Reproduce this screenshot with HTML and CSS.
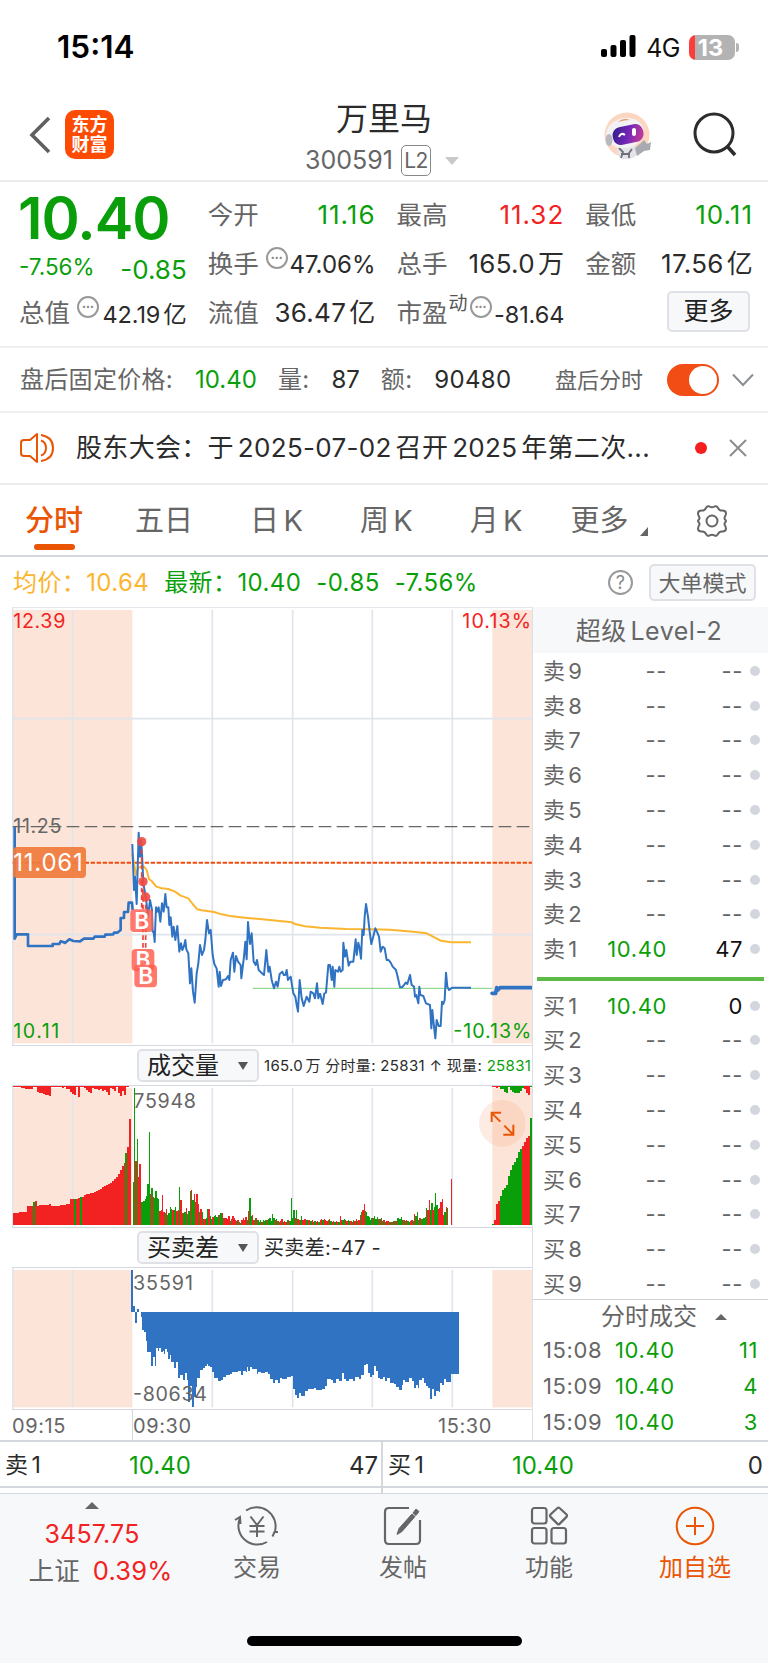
FILE: index.html
```html
<!DOCTYPE html>
<html lang="zh-CN">
  <head>
    <meta charset="UTF-8" />
    <meta name="viewport" content="width=device-width, initial-scale=1.0" />
    <title>万里马 300591</title>
    <link rel="stylesheet" href="styles.css">
  </head>
  <body>
    <div class="status-bar">
      <span class="clock">15:14</span>
      <div class="status-icons">
        <svg width="36" height="24" viewBox="0 0 36 24">
          <rect x="0" y="14" width="6" height="8" rx="2" />
          <rect x="9.5" y="10" width="6" height="12" rx="2" />
          <rect x="19" y="5" width="6" height="17" rx="2" />
          <rect x="28.5" y="0" width="6" height="22" rx="2" />
        </svg>
        <span class="network">4G</span>
        <div class="battery"><span>13</span></div>
        <div class="battery-tip"></div>
      </div>
    </div>

    <header class="header">
      <div class="header-side">
        <svg width="22" height="38" viewBox="0 0 22 38" fill="none" stroke="#606060" stroke-width="3.6">
          <path d="M20 2 3 19l17 17" />
        </svg>
        <div class="logo">东方<br>财富</div>
      </div>
      <div class="header-title">
        <h1>万里马</h1>
        <div class="code"><span>300591</span><span class="level">L2</span><i class="tri-down"></i></div>
      </div>
      <div class="header-side right">
        <svg width="48" height="50" viewBox="0 0 48 50">
          <defs>
            <linearGradient id="visor" x1="0" y1="0" x2="1" y2=".3">
              <stop offset="0" stop-color="#2b1f86" />
              <stop offset=".6" stop-color="#7426b8" />
              <stop offset="1" stop-color="#b63a9c" />
            </linearGradient>
          </defs>
          <circle cx="23" cy="25" r="22.5" fill="#fcd6c0" />
          <path d="M14 35q-3 7 2 13 8 3 15-1 3-5 0-12z" fill="#e4e4e8" />
          <path d="M31 38l6-5 3-3 3 4 4-2-1 8-6 1-7 5z" fill="#a9aab1" />
          <path d="M15 38l4 4-2 6M28 39l-3 4v5M17 44h9" stroke="#6d7078" stroke-width="1.8" fill="none" />
          <ellipse cx="21" cy="23" rx="19" ry="15" transform="rotate(-12 21 23)" fill="#f2f2f4" />
          <ellipse cx="5" cy="30" rx="3.5" ry="6" fill="#b9bac1" />
          <path d="M14 12q5-5 12-2-6 0-12 2z" fill="#e99557" />
          <rect x="8.500" y="15.500" width="31" height="18" rx="8" transform="rotate(-12 24 24)" fill="url(#visor)" />
          <path d="M15 27q2-5 6-2" stroke="#fff" stroke-width="2" fill="none" />
          <rect x="28" y="18" width="4" height="8" rx="2" fill="#fff" />
        </svg>
        <svg width="44" height="46" viewBox="0 0 44 46" fill="none" stroke="#2c2c2c" stroke-width="3">
          <circle cx="21" cy="21" r="19" />
          <path d="M34 34l8 9" stroke-width="3.6" />
        </svg>
      </div>
    </header>

    <section class="quote">
      <div class="price">10.40</div>
      <div class="cell"><label>今开</label><b class="green">11.16</b></div>
      <div class="cell"><label>最高</label><b class="red">11.32</b></div>
      <div class="cell"><label>最低</label><b class="green">10.11</b></div>

      <div class="cell change green"><span class="pct">-7.56%</span><span>-0.85</span></div>
      <div class="cell"><label>换手</label><i class="dots">•••</i><b class="mid">47.06%</b></div>
      <div class="cell"><label>总手</label><b>165.0<em>万</em></b></div>
      <div class="cell"><label>金额</label><b>17.56<em>亿</em></b></div>

      <div class="cell"><label>总值</label><i class="dots">•••</i><b class="small">42.19<em>亿</em></b></div>
      <div class="cell"><label>流值</label><b>36.47<em>亿</em></b></div>
      <div class="cell"><label>市盈</label><sup>动</sup><i class="dots tight">•••</i><b class="small">-81.64</b></div>
      <button class="more">更多</button>
    </section>

    <section class="after-hours">
      <span class="ah-label">盘后固定价格:</span>
      <span class="ah-price green">10.40</span>
      <span class="ah-label">量:</span>
      <span class="ah-vol">87</span>
      <span class="ah-label">额:</span>
      <span class="ah-amount">90480</span>
      <span class="ah-switch">盘后分时</span>
      <span class="toggle"></span>
      <svg width="22" height="14" viewBox="0 0 22 14" fill="none" stroke="#8a8d92" stroke-width="2">
        <path d="M1 1.500l10 10.500 10-10.500" />
      </svg>
    </section>

    <section class="notice">
      <svg width="36" height="32" viewBox="0 0 36 32" fill="none" stroke="#ea5504" stroke-width="2" stroke-linejoin="round">
        <path d="M17 2v28l-7-6H4q-3 0-3-3V11q0-3 3-3h6z" />
        <path d="M21 8.500q5 1.500 5 7.500t-5 7.500M21 3q12 2 12 13T21 29" />
      </svg>
      <p>股东大会：于<s></s>2025-07-02<s></s>召开<s></s>2025<s></s>年第二次...</p>
      <span class="dot"></span>
      <svg width="18" height="18" viewBox="0 0 18 18" stroke="#8c8c8c" stroke-width="2"><path d="M1 1l16 16M17 1 1 17" /></svg>
    </section>

    <nav class="tabs">
      <a class="active">分时</a>
      <a>五日</a>
      <a>日<s></s>K</a>
      <a>周<s></s>K</a>
      <a>月<s></s>K</a>
      <a class="tab-more">更多</a>
      <svg width="34" height="34" viewBox="0 0 34 34" fill="none" stroke="#666" stroke-width="2" stroke-linejoin="round">
        <path d="M11 4q1-2.500 3.500-1.500 2.500 1.500 5 0Q22 1.500 23 4q1.500 3 4.500 2.500 3 0 3.500 2.500 0 2-1 3.500-1 1.500 0 3 2 1.500 0 3-1 1.500 0 3 1 1.500 1 3.500-.5 2.500-3.500 2.500-3-.5-4.500 2.500-1 2.500-3.500 1.500-2.500-1.500-5 0Q12 32.500 11 30q-1.500-3-4.500-2.500-3 0-3.500-2.500 0-2 1-3.500 1-1.500 0-3-2-1.500 0-3 1-1.500 0-3-1-1.500-1-3.500.5-2.500 3.500-2.500Q9.500 7 11 4z" />
        <circle cx="17" cy="17" r="5.500" />
      </svg>
    </nav>

    <section class="summary">
      <span class="avg">均价：</span><span class="avg val">10.64</span>
      <span class="green">最新：</span><span class="green val">10.40</span><span class="green val">-0.85</span><span class="green">-7.56%</span>
      <i class="help">?</i>
      <button class="mode">大单模式</button>
    </section>

    <main class="board">
      <div class="charts">
        <!-- chart units are a third of a pixel -->
        <svg class="chart price-chart" viewBox="0 0 1560 1311">
          <rect class="session" x="2" y="6" width="359" height="1300" />
          <rect class="session" x="1441" y="6" width="119" height="1300" />
          <path class="grid" d="M182 6v1300M601 6v1300M842 6v1300M1081 6v1300M1321 6v1300M2 332H1560M2 980H1560M2 0V1311" />
          <path d="M2 656H1560" stroke="#666" stroke-width="4" stroke-dasharray="38 16" />
          <path d="M2 764H1560" stroke="#f04e0f" stroke-width="6" stroke-dasharray="13 5" />
          <path d="M722 1141H1441" stroke="#7bd07b" stroke-width="3" />
          <g fill="none" stroke-linejoin="round">
            <polyline class="avg-line" points="361,736 372,801 378,781 387,776 396,776 404,786 411,813 419,819 432,835 449,841 469,843 489,851 506,863 529,871 542,888 556,904 569,907 606,912 629,919 654,924 699,929 774,936 839,943 849,948 879,955 924,959 1004,963 1074,964 1134,965 1204,971 1244,976 1269,989 1286,998 1319,1003 1377,1003" />
            <g transform="translate(-36 -24)">
              <polyline class="price-line thick" points="44,680 44,1016 50,1003 84,1003 84,1038 158,1038 158,1032 178,1032 182,1024 190,1026 195,1029 208,1018 220,1023 240,1024 252,1016 280,1016 284,1010 314,1010 316,1004 340,1003 342,998 352,998 362,990 362,954 372,954 372,936 384,936 386,908 396,908 398,930" />
            </g>
            <g transform="translate(324 636)">
              <polyline class="price-line" points="37,72 42,210 45,170 50,252 56,38 60,110 63,60 66,100 70,190 78,235 84,290 90,240 96,270 98,335 101,335 104,366 108,262 112,275 116,262 121,305 126,250 131,275 136,222 140,262 145,262 148,315 152,292 157,350 161,320 166,360 172,318 178,395 183,370 187,390 192,378 196,360 199,388 205,400 210,490 214,445 219,515 224,548 230,460 235,430 240,375 246,405 252,390 256,360 261,300 267,340 272,330 278,405 283,432 290,446 296,500 299,455 303,498 309,480 318,478 324,468 328,480 332,420 339,398 343,455 348,408 354,425 362,435 364,475 372,410 376,365 380,418 384,306 390,372 395,340 401,425 407,435 411,420 416,450 424,458 432,465 439,390 445,455 449,440 455,480 462,505 468,485 473,500 479,462 487,455 491,465 496,465 500,450 504,480 512,470 520,520 526,530 530,555 534,575 539,480 545,535 551,558 560,530 568,545 572,515 580,520 585,535 591,490 595,535 600,520" />
            </g>
            <g transform="translate(924 636)">
              <polyline class="price-line" points="0,520 8,552 13,520 18,518 25,435 30,435 35,480 38,440 43,500 46,450 54,455 58,440 62,455 68,450 70,368 75,410 79,390 86,437 91,425 100,425 107,358 110,405 115,368 119,385 123,416 127,330 131,345 134,290 138,252 144,290 149,335 154,372 161,345 166,325 172,338 177,350 182,395 188,380 194,385 200,420 206,420 212,428 218,440 228,450 234,475 240,502 246,502 252,495 257,488 262,492 270,465 275,495 282,500 285,530 289,525 295,550 298,500 301,525 310,528 318,550 330,555 334,625 337,570 341,610 346,655 350,600 356,618 362,618 366,545 370,552 374,540 378,458 382,500 387,510 397,503 453,503" />
              <polyline class="price-line closing" points="516,520 527,520 530,503 534,510 540,503 633,503" />
            </g>
          </g>
          <rect x="3" y="717" width="219" height="93" rx="12" fill="#f07b3c" fill-opacity=".93" />
          <text class="cursor-text" x="4" y="788" textLength="208">11.061</text>
          <g transform="translate(-36 -24)">
            <path d="M425 725v205M429 845v205M437 891v205" stroke="#f0413a" stroke-width="5" stroke-dasharray="14 9" />
            <g fill="#ef4a41" fill-opacity=".9">
              <circle cx="425" cy="725" r="14" />
              <circle cx="429" cy="845" r="14" />
              <circle cx="437" cy="891" r="14" />
            </g>
            <g class="buy-mark">
              <rect x="391" y="928" width="68" height="68" rx="12" /><text x="425" y="986">B</text>
              <rect x="395" y="1047" width="68" height="66" rx="12" /><text x="429" y="1104">B</text>
              <rect x="403" y="1094" width="68" height="68" rx="12" /><text x="437" y="1152">B</text>
            </g>
          </g>
          <text class="red-text" x="4" y="60" textLength="156">12.39</text>
          <text class="red-text" x="1351" y="60" textLength="206">10.13%</text>
          <text class="gray-text" x="4" y="674" textLength="144">11.25</text>
          <text class="green-text" x="4" y="1289" textLength="138">10.11</text>
          <text class="green-text" x="1324" y="1289" textLength="234">-10.13%</text>
        </svg>

        <div class="chart-bar">
          <button class="select">成交量<i></i></button>
          <span class="vol-info">165.0<s></s>万 分时量: 25831 ↑ 现量: <span class="green">25831</span></span>
        </div>
        <svg class="chart" viewBox="0 0 1560 423">
          <rect class="session" x="2" y="6" width="359" height="411" />
          <rect class="session" x="1441" y="6" width="119" height="411" />
          <path class="grid" d="M182 6v411M601 6v411M842 6v411M1081 6v411M1321 6v411M2 0V423" />
          <text class="gray-text" x="364" y="66" textLength="188">75948</text>
          <g id="volumeBars" shape-rendering="crispEdges"></g>
          <circle cx="1471" cy="112" r="70" fill="#f58a55" fill-opacity=".16" />
          <path d="M1465 107l-24-24M1467 80h-28v28M1477 119l24 24M1474 146h30v-30" fill="none" stroke="#ea5504" stroke-width="6" />
        </svg>

        <div class="chart-bar">
          <button class="select">买卖差<i></i></button>
          <span class="diff-info">买卖差:-47 -</span>
        </div>
        <svg class="chart" viewBox="0 0 1560 423">
          <rect class="session" x="2" y="6" width="359" height="412" />
          <rect class="session" x="1441" y="6" width="119" height="412" />
          <path class="grid" d="M182 6v412M601 6v412M842 6v412M1081 6v412M1321 6v412M2 0V423" />
          <path id="diffArea" transform="translate(-36 -129) scale(1.0331 1)" fill="#3173c3" shape-rendering="crispEdges" />
          <text class="gray-text" x="363" y="65" textLength="180">35591</text>
          <text class="gray-text" x="363" y="398" textLength="222">-80634</text>
        </svg>

        <div class="axis"><span>09:15</span><span>09:30</span><span>15:30</span></div>
      </div>

      <aside class="level2">
        <h2>超级<s></s>Level-2</h2>
        <ul class="book">
          <li><span>卖<s></s>9</span><b>--</b><b>--</b><i></i></li>
          <li><span>卖<s></s>8</span><b>--</b><b>--</b><i></i></li>
          <li><span>卖<s></s>7</span><b>--</b><b>--</b><i></i></li>
          <li><span>卖<s></s>6</span><b>--</b><b>--</b><i></i></li>
          <li><span>卖<s></s>5</span><b>--</b><b>--</b><i></i></li>
          <li><span>卖<s></s>4</span><b>--</b><b>--</b><i></i></li>
          <li><span>卖<s></s>3</span><b>--</b><b>--</b><i></i></li>
          <li><span>卖<s></s>2</span><b>--</b><b>--</b><i></i></li>
          <li><span>卖<s></s>1</span><b class="green">10.40</b><b class="black">47</b><i></i></li>
        </ul>
        <div class="ratio"></div>
        <ul class="book">
          <li><span>买<s></s>1</span><b class="green">10.40</b><b class="black">0</b><i></i></li>
          <li><span>买<s></s>2</span><b>--</b><b>--</b><i></i></li>
          <li><span>买<s></s>3</span><b>--</b><b>--</b><i></i></li>
          <li><span>买<s></s>4</span><b>--</b><b>--</b><i></i></li>
          <li><span>买<s></s>5</span><b>--</b><b>--</b><i></i></li>
          <li><span>买<s></s>6</span><b>--</b><b>--</b><i></i></li>
          <li><span>买<s></s>7</span><b>--</b><b>--</b><i></i></li>
          <li><span>买<s></s>8</span><b>--</b><b>--</b><i></i></li>
          <li><span>买<s></s>9</span><b>--</b><b>--</b><i></i></li>
        </ul>
        <h3>分时成交<i></i></h3>
        <ul class="trades">
          <li><span>15:08</span><b>10.40</b><b>11</b></li>
          <li><span>15:09</span><b>10.40</b><b>4</b></li>
          <li><span>15:09</span><b>10.40</b><b>3</b></li>
        </ul>
      </aside>
    </main>

    <section class="best">
      <div><span>卖<s></s>1</span><b class="green">10.40</b><span class="qty">47</span></div>
      <div><span>买<s></s>1</span><b class="green">10.40</b><span class="qty">0</span></div>
    </section>

    <footer class="bottom-nav">
      <div class="index">
        <i></i>
        <strong>3457.75</strong>
        <p>上证<span>0.39%</span></p>
      </div>
      <a>
        <svg width="46" height="42" viewBox="0 0 46 42" fill="none" stroke="#666" stroke-width="2">
          <path d="M12 5.500A19 19 0 0 1 41 26M44 27h-3.500l-2 4.500M33 37A19 19 0 0 1 6 13M1 15l5-3 .5 7" />
          <path d="M16.500 11.500l6.500 8.500 6.500-8.500M15.500 21h15M15.500 26.500h15M23 20v12" />
        </svg>
        交易
      </a>
      <a>
        <svg width="42" height="42" viewBox="0 0 42 42" fill="none" stroke="#666" stroke-width="2.200">
          <path d="M27 3H7Q3 3 3 7v28q0 4 4 4h27q4 0 4-4V15" />
          <path d="M34 4l3 2.500-3 4-3-2.500zM30 9l3 2.500-13 15-5 3 2-6z" fill="#666" stroke-width="1" />
        </svg>
        发帖
      </a>
      <a>
        <svg width="42" height="42" viewBox="0 0 42 42" fill="none" stroke="#666" stroke-width="2.200">
          <rect x="4" y="3" width="14.500" height="15.500" rx="2.500" />
          <rect x="4" y="23" width="14.500" height="15.500" rx="2.500" />
          <rect x="23.500" y="23" width="14.500" height="15.500" rx="2.500" />
          <path d="M29.500 3q1-1 2 0l7 6.500q1 1.200 0 2.400l-7 7q-1 1-2 0l-7-7q-1-1.200 0-2.400z" />
        </svg>
        功能
      </a>
      <a class="add">
        <svg width="42" height="42" viewBox="0 0 42 42" fill="none" stroke="#ea5504" stroke-width="2">
          <circle cx="21" cy="21" r="18.300" />
          <path d="M12 21h18M21 12v18" />
        </svg>
        加自选
      </a>
      <div class="home-bar"></div>
    </footer>

    <script src="charts.js"></script>
  </body>
</html>
```
FILE: styles.css
```css
* {
  box-sizing: border-box;
}

body {
  margin: 0;
  width: 768px;
  height: 1663px;
  overflow: hidden;
  background: #fff;
  color: #2b2b2b;
  font-family: "Inter", "Noto Sans CJK SC", sans-serif;
  font-size: 24px;
  line-height: 1;
}

h1, h2, h3, p, ul {
  margin: 0;
  padding: 0;
  font-weight: 400;
  list-style: none;
}

b, em, i {
  font-weight: 400;
  font-style: normal;
}

/* thin gap between chinese and latin text */
s {
  display: inline-block;
  width: .15em;
}

button {
  font: inherit;
  color: inherit;
  padding: 0;
  background: #f7f8fa;
  border: 2px solid #dfe1e7;
  border-radius: 5px;
}

svg {
  display: block;
  flex: none;
}

.green { color: #0a9f0a; }
.red { color: #f22222; }

/* Status bar */
.status-bar {
  display: flex;
  justify-content: space-between;
  height: 94px;
  padding: 0 29px 0 57px;
  align-items: center;
}

.clock {
  color: #000;
  font-size: 31.500px;
  font-weight: 600;
}

.status-icons {
  display: flex;
  align-items: center;
}

.network {
  margin: 2px 9px 0 9px;
  color: #111;
  font-size: 25px;
  letter-spacing: -.5px;
}

.battery {
  width: 46px;
  height: 25px;
  border-radius: 7px;
  background: linear-gradient(90deg, #fc3d39 6px, #b3b3b3 6px);
  color: #fff;
  font-size: 23.500px;
  font-weight: 700;
  line-height: 25px;
  text-align: center;
}

.battery span {
  margin-right: 3px;
}

.battery-tip {
  width: 3px;
  height: 9px;
  margin-left: 1px;
  border-radius: 0 3px 3px 0;
  background: #b3b3b3;
}

/* Header */
.header {
  display: flex;
  justify-content: space-between;
  height: 88px;
  border-bottom: 2px solid #ececee;
}

.header-side {
  display: flex;
  width: 180px;
  padding-left: 29px;
  align-items: flex-start;
}

.header-side > svg {
  margin-top: 22px;
}

.logo {
  width: 49px;
  height: 49px;
  margin: 16px 0 0 14px;
  padding-top: 5px;
  border-radius: 10px;
  background: #fe4b03;
  color: #fff;
  font-size: 18px;
  font-weight: 700;
  line-height: 20px;
  text-align: center;
}

.header-side.right {
  padding: 0 31px 0 0;
  justify-content: flex-end;
  gap: 41px;
}

.header-side.right > svg {
  margin-top: 18px;
}

.header-side.right > svg:first-child {
  margin-top: 16px;
}

.header-title {
  width: 200px;
  text-align: center;
}

.header-title h1 {
  height: 51px;
  font-size: 32px;
  line-height: 49px;
}

.code {
  display: flex;
  margin-left: 21px;
  color: #666;
  font-size: 25px;
  align-items: center;
}

.level {
  width: 30px;
  height: 31px;
  margin-left: 8px;
  border: 1.500px solid #888;
  border-radius: 5px;
  font-size: 21px;
  line-height: 29px;
  letter-spacing: -.8px;
}

.tri-down {
  margin-left: 14px;
  border: 7px solid transparent;
  border-top: 8px solid #c9c9c9;
  border-bottom: 0;
}

/* Quote table */
.quote {
  display: grid;
  grid-template-columns: repeat(4, 1fr);
  grid-template-rows: repeat(3, 49px);
  column-gap: 21px;
  height: 166px;
  padding: 8px 15px 0 19px;
  border-bottom: 2px solid #efeff1;
}

.price {
  margin-left: -1px;
  color: #0a9f0a;
  font-size: 58px;
  font-weight: 600;
  line-height: 57px;
  letter-spacing: -1px;
}

.cell {
  display: flex;
  align-items: center;
}

.cell label {
  color: #666;
  font-size: 25.500px;
}

.cell b {
  margin-left: auto;
  font-size: 26px;
  letter-spacing: .3px;
  white-space: nowrap;
}

.cell b.green,
.cell b.red {
  letter-spacing: 1px;
}

.cell b.mid {
  padding-top: 3px;
  font-size: 24px;
  letter-spacing: 0;
}

.cell b.small {
  padding-top: 5px;
  font-size: 23.500px;
  letter-spacing: -.1px;
}

.cell em {
  margin-left: 3px;
}

.cell sup {
  margin: -18px 0 0 1px;
  color: #555;
  font-size: 19px;
  line-height: 19px;
}

.dots {
  width: 22px;
  height: 22px;
  margin: -11px 0 0 7px;
  border: 2px solid #999;
  border-radius: 50%;
  color: #888;
  font-size: 7px;
  line-height: 18px;
  text-align: center;
}

.dots.tight {
  margin-left: 2px;
}

.change {
  padding-top: 12px;
  justify-content: space-between;
}

.change .pct {
  margin-top: -5px;
  font-size: 22.500px;
}

.change span:last-child {
  font-size: 26px;
}

.more {
  width: 83px;
  height: 41px;
  margin-top: 3px;
  margin-right: 3px;
  justify-self: end;
  color: #222;
  font-size: 25px;
}

/* After hours */
.after-hours {
  display: flex;
  height: 65px;
  padding: 0 14px 0 20px;
  border-bottom: 2px solid #efeff1;
  align-items: center;
}

.ah-label {
  color: #666;
  font-size: 24px;
  letter-spacing: .3px;
}

.ah-price { margin: 0 21px 0 22px; }
.ah-vol { margin: 0 21px 0 22px; }

.ah-amount {
  margin-left: 22px;
  letter-spacing: .3px;
}

.ah-switch {
  margin-left: auto;
  color: #666;
  font-size: 22px;
}

.toggle {
  width: 52px;
  height: 32px;
  margin: 0 13px 0 24px;
  padding: 2px;
  border-radius: 16px;
  background: #f24d14;
}

.toggle::after {
  content: "";
  display: block;
  width: 28px;
  height: 28px;
  margin-left: 20px;
  border-radius: 50%;
  background: #fff;
}

/* Notice */
.notice {
  display: flex;
  height: 72px;
  padding: 0 21px 0 20px;
  border-bottom: 2px solid #ececee;
  align-items: center;
}

.notice p {
  margin-left: 20px;
  font-size: 26px;
  letter-spacing: .32px;
  white-space: nowrap;
}

.dot {
  width: 12px;
  height: 12px;
  margin: 0 22px 0 auto;
  border-radius: 50%;
  background: #f51f1f;
}

/* Period tabs */
.tabs {
  display: flex;
  height: 72px;
  padding: 1px 39px 0 25px;
  border-bottom: 2px solid #d7d9e0;
  color: #666;
  font-size: 29px;
  align-items: center;
}

.tabs a {
  position: relative;
  margin-right: 57px;
  white-space: nowrap;
}

.tabs a.active {
  margin-right: 52px;
  color: #ea5504;
  font-weight: 500;
}

.active::after {
  content: "";
  position: absolute;
  left: 9px;
  bottom: -15px;
  width: 41px;
  height: 6px;
  border-radius: 3px;
  background: #ea5504;
}

.tabs a:nth-child(5) {
  margin-right: 48px;
}

.tabs a.tab-more {
  margin-right: auto;
  padding-right: 19px;
}

.tab-more::after {
  content: "";
  position: absolute;
  right: 0;
  bottom: -1px;
  border-left: 8px solid transparent;
  border-bottom: 9px solid #666;
}

/* Price summary */
.summary {
  display: flex;
  height: 50px;
  padding: 1px 12px 0 13px;
  align-items: center;
  font-size: 24px;
  letter-spacing: .4px;
  white-space: nowrap;
}

.avg { color: #fbb52f; }
.val { margin-right: 15px; }

.help {
  width: 25px;
  height: 25px;
  margin: 0 16px 0 auto;
  border: 2px solid #999;
  border-radius: 50%;
  color: #888;
  font-size: 18px;
  line-height: 21px;
  text-align: center;
}

.mode {
  width: 107px;
  height: 37px;
  color: #666;
  font-size: 22px;
}

/* Charts */
.board {
  display: flex;
  height: 833px;
}

.charts {
  width: 533px;
  border-right: 1px solid #dddfe6;
}

.chart {
  width: 520px;
  height: 142px;
  margin-left: 12px;
  border-bottom: 1px solid #d5d8e0;
}

.price-chart {
  height: 439px;
  border-top: 1px solid #e3e6eb;
}

.session { fill: #fce5d8; }

.grid {
  fill: none;
  stroke: #e0e4ec;
  stroke-width: 5;
}

.price-line {
  stroke: #3173c3;
  stroke-width: 6;
}

.price-line.thick { stroke-width: 8; }

.price-line.closing {
  stroke-width: 11;
  stroke-linecap: round;
}

.avg-line {
  stroke: #fbb52f;
  stroke-width: 6;
}

.chart text { font-size: 59px; }
.chart .red-text { fill: #f22222; }
.chart .green-text { fill: #0a9f0a; }
.chart .gray-text { fill: #666; }

.chart .cursor-text {
  fill: #fff;
  font-size: 72px;
}

.buy-mark rect {
  fill: #ff5c4d;
  fill-opacity: .82;
}

.chart .buy-mark text {
  fill: #fff;
  font-size: 68px;
  font-weight: 600;
  text-anchor: middle;
}

.chart-bar {
  display: flex;
  height: 40px;
  margin-left: 12px;
  padding-left: 125px;
  border-bottom: 1px solid #d5d8e0;
  align-items: center;
  white-space: nowrap;
}

.select {
  display: flex;
  width: 122px;
  height: 33px;
  padding: 0 9px 0 8px;
  align-items: center;
  justify-content: space-between;
  color: #222;
}

.select i {
  border: 5px solid transparent;
  border-top: 8px solid #555;
  border-bottom: 0;
}

.vol-info {
  margin-left: 5px;
  font-size: 15px;
  letter-spacing: .32px;
}

.diff-info {
  margin-left: 5px;
  font-size: 20px;
  letter-spacing: .35px;
}

.axis {
  display: flex;
  height: 30px;
  margin-left: 12px;
  color: #666;
  font-size: 20px;
  line-height: 32px;
  letter-spacing: .6px;
}

.axis span:first-child {
  width: 121px;
  border-right: 1px solid #d5d8e0;
}

.axis span:last-child {
  margin: 0 40px 0 auto;
}

/* Level 2 */
.level2 {
  flex: 1;
}

.level2 h2 {
  height: 46px;
  background: #f7f8fa;
  color: #666;
  font-size: 25px;
  line-height: 48px;
  text-align: center;
  letter-spacing: .5px;
  padding-right: 3px;
}

.book li {
  display: flex;
  height: 34.800px;
  padding: 1px 0 0 10px;
  align-items: center;
  color: #666;
  font-size: 22px;
}

.book li span {
  width: 45px;
  white-space: nowrap;
  font-size: 22px;
}

.book b {
  width: 79px;
  text-align: right;
  letter-spacing: .6px;
}

.book b + b { width: 76px; }
.book .black { color: #111; }

.book i {
  width: 10px;
  height: 10px;
  margin-left: 7px;
  border-radius: 50%;
  background: #d3d6dd;
}

.ratio {
  height: 4px;
  margin: 10.500px 4px 7px;
  background: #5cbb47;
}

.level2 h3 {
  display: flex;
  height: 33px;
  margin-top: -2px;
  padding: 2px 0 0 27px;
  border-top: 1px solid #d0d2d8;
  color: #666;
  font-size: 24px;
  align-items: center;
  justify-content: center;
  gap: 18px;
}

.level2 h3 i {
  border: 6px solid transparent;
  border-top: 0;
  border-bottom: 6px solid #666;
}

.trades li {
  display: flex;
  height: 36px;
  padding: 0 10px 0 10px;
  align-items: center;
  color: #0a9f0a;
  font-size: 22px;
  letter-spacing: .6px;
}

.trades span {
  width: 72px;
  color: #666;
}

.trades b:last-child {
  margin-left: auto;
}

/* Best bid / ask */
.best {
  display: flex;
  height: 53px;
  border-top: 2px solid #d5d7de;
}

.best div {
  display: flex;
  width: 383px;
  height: 51px;
  padding: 0 3px 4px 5px;
  border-right: 2px solid #d5d7de;
  background: linear-gradient(#d5d7de, #d5d7de) 0 44px / 100% 2px no-repeat;
  align-items: center;
}

.best div:last-child {
  flex: 1;
  padding-right: 5px;
  border-right: 0;
}

.best div > span:first-child {
  width: 124px;
  font-size: 23px;
}

.best .qty { margin-left: auto; }

/* Bottom nav */
.bottom-nav {
  display: grid;
  grid-template-columns: 184px repeat(4, 146px);
  height: 170px;
  border-top: 1px solid #d5d7de;
  background: #f7f8fa;
  position: relative;
}

.bottom-nav a {
  display: flex;
  flex-direction: column;
  align-items: center;
  padding-top: 11px;
  color: #666;
  gap: 9px;
}

.bottom-nav a.add { color: #ea5504; }

.index {
  display: flex;
  flex-direction: column;
  align-items: center;
  padding: 8px 0 0;
  color: #f22222;
}

.index i {
  border: 7px solid transparent;
  border-top: 0;
  border-bottom: 7px solid #666;
}

.index strong {
  margin: 13px 0 0;
  font-weight: 400;
  font-size: 25px;
  letter-spacing: .2px;
}

.index p {
  margin: 11px 0 0 17px;
  color: #666;
  font-size: 25.500px;
  letter-spacing: .2px;
  white-space: nowrap;
}

.index p span {
  margin-left: 13px;
  color: #f22222;
}

.home-bar {
  position: absolute;
  left: 247px;
  bottom: 17px;
  width: 275px;
  height: 10px;
  border-radius: 5px;
  background: #000;
}
```
FILE: charts.js
```js
// positive = red bar, negative = green bar
const auction = [36, 36, 37, 38, 38, 39, 40, 56, 57, 57, -70, 73, 58, 59, 60, 59, 60, 61, 63, 57,
  57, 58, 57, 58, 60, 61, 61, 62, 63, 77, 78, -77, 79, 80, -83, 84, 90, 92, 93, 95,
  96, 98, 101, 105, 109, 113, 117, 120, 123, 126, 131, 137, 145, 153, 165, 176, 187, -215, 235, 318];

const morning = [-130, -412, 192, -258, 145, 182, -70, -70, -73, -78, -88, -122, -278, 93, -112, 85, -80, -102, -80, -78,
  43, 45, 90, 38, -35, 48, -30, -35, -53, -48, 45, -45, -55, 42, 45, -115, 75, -35, 35, -38,
  50, -32, -42, -103, 105, -75, 93, -68, 92, 62, -38, 47, -40, 18, 18, -20, -48, 47, -28, -18,
  25, -28, -30, -25, -30, 30, -35, 35, -20, 20, 20, 18, 28, -13, 18, 27, 22, 14, -12, 14,
  -8, -7, 14, 22, 15, 23, -15, 42, -80, -28, 30, 14, -20, 22, -16, -10, -14, 9, -14, -12];

const day = morning.concat([-14, 16, -19, -20, -12, -33, -20, 15, -18, 13, -10, 12, 17, -9, 12, 10, -14, 15, -12, -82,
  -20, -44, 20, -44, 18, 16, -16, -28, 15, 18, 17, -15, 15, 14, -12, 14, 10, -12, 10, 12,
  -10, 14, 17, -14, 18, 15, 12, -16, 17, -12, 10, 12, -10, 12, 9, -10, 27, 16, -14, -18,
  15, 12, -14, -12, 13, 9, -14, 13, 18, -13, 16, 30, -40, 45, 62, -42, -38, -28, -23, -14,
  -20, 22, -26, -18, -25, -17, 17, -20, -12, 14, -10, 12, 13, -10, -9, 9, -13, -13, 12, -20,
  -22, -19, -23, -16, 14, -12, 14, -12, -10, 12, 14, -13, 33, -26, -38, -15, 20, -17, -17, -20,
  -24, -50, 45, 75, -45, -65, 45, -55, -97, -60, 48, 50, 70, 78, 30, -40, 55, -52, 0, 0, 138]);

const closing = [-3, 14, 62, 72, -88, -105, -112, -120, -148, -165, -180, -190, -202, -218, -227, 238, 250, 260, 268, -320];

// unmatched volume, hangs from the top edge
const auctionTop = [3, 3, 2, 4, 6, 7, 8, 9, 9, 9, 2, 3, 18, 20, 22, 24, 26, 28, 31, 2,
  3, 2, 4, 2, 3, 5, 4, 8, 10, 18, 23, 27, 2, 32, 2, 3, 6, 13, 18, 21,
  6, 10, 8, 13, 10, 14, 12, 18, 26, 5, 9, 14, 4, 20, 30, 14, 26, 3, 3, 0];
const closingTop = [2, 3, 5, 4, -10, -9, -18, -22, -3, -12, -18, -20, -22, -20, -15, -5, 8, 22, 28, -2];

const bars = document.getElementById('volumeBars');

function drawBars(values, x0, step, width, top) {
  values.forEach((v, i) => {
    const h = Math.abs(v);
    const rect = document.createElementNS('http://www.w3.org/2000/svg', 'rect');
    rect.setAttribute('x', x0 + i * step);
    rect.setAttribute('y', top ? 0 : 417 - h);
    rect.setAttribute('width', width);
    rect.setAttribute('height', h);
    rect.setAttribute('fill', v > 0 ? '#f22222' : '#0a9f0a');
    bars.appendChild(rect);
  });
}

drawBars(auction, 3, 5.92, 6, false);
drawBars(auctionTop, 3, 5.92, 6, true);
drawBars(day, 362, 3.98, 4, false);
drawBars(closing, 1440, 6, 6, false);
drawBars(closingTop, 1440, 6, 6, true);

// lower edge of the buy/sell difference, [x, y]
const diff = [[381, 135], [387, 243], [393, 293], [398, 252], [403, 260], [408, 275], [412, 315], [418, 320], [424, 348],
  [428, 380], [439, 423], [444, 395], [449, 423], [454, 370], [458, 378], [462, 370], [467, 382], [472, 378], [476, 388], [480, 371],
  [484, 380], [488, 402], [493, 390], [498, 412], [506, 430], [511, 412], [518, 460], [523, 450], [532, 464], [537, 445],
  [542, 466], [547, 530], [552, 484], [557, 547], [562, 515], [568, 485], [573, 460], [580, 434], [590, 430], [594, 422],
  [600, 417], [605, 424], [611, 426], [616, 442], [621, 458], [627, 460], [633, 467], [642, 466], [648, 455], [655, 450],
  [668, 446], [674, 440], [685, 442], [692, 438], [700, 451], [707, 437], [713, 440], [718, 425], [721, 438], [726, 425],
  [732, 432], [741, 433], [745, 447], [750, 440], [758, 445], [769, 440], [778, 446], [785, 462], [792, 474], [799, 466],
  [806, 474], [813, 460], [820, 461], [832, 457], [844, 453], [850, 492], [857, 510], [863, 518], [868, 505], [873, 512],
  [879, 514], [885, 498], [893, 491], [912, 488], [918, 494], [936, 491], [944, 482], [951, 462], [960, 466], [968, 473],
  [977, 461], [985, 467], [994, 443], [998, 462], [1006, 469], [1014, 463], [1025, 468], [1031, 457], [1042, 463], [1049, 450],
  [1057, 420], [1063, 418], [1068, 445], [1073, 455], [1081, 451], [1086, 423], [1091, 438], [1097, 460], [1104, 463], [1111, 455],
  [1118, 468], [1124, 460], [1133, 473], [1144, 478], [1151, 487], [1160, 496], [1166, 480], [1171, 466], [1177, 470], [1187, 460],
  [1196, 467], [1202, 490], [1209, 480], [1215, 490], [1218, 465], [1225, 460], [1231, 475], [1238, 484], [1244, 490], [1249, 523],
  [1255, 492], [1261, 514], [1267, 498], [1274, 500], [1279, 475], [1284, 480], [1290, 463], [1296, 472], [1303, 470], [1309, 446]];

let d = 'M381 261V135';
for (let i = 1; i < diff.length; i++) {
  d += `H${diff[i][0]}V${diff[i][1]}`;
}
d += 'H1332V261Z';
document.getElementById('diffArea').setAttribute('d', d);
```
